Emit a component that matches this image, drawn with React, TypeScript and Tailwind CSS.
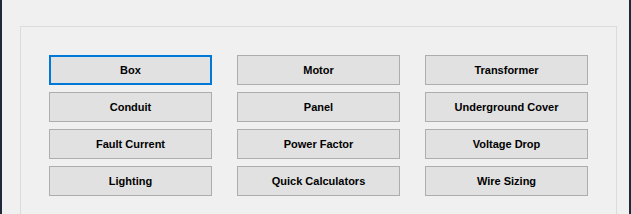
const buttons = [
  "Box",
  "Motor",
  "Transformer",
  "Conduit",
  "Panel",
  "Underground Cover",
  "Fault Current",
  "Power Factor",
  "Voltage Drop",
  "Lighting",
  "Quick Calculators",
  "Wire Sizing",
];

export default function App() {
  return (
    <div className="flex h-[214px] w-[631px] overflow-hidden bg-[#1e2a38]">
      {/* Window body */}
      <div className="mx-[2px] flex-1 bg-[#f0f0f0] pl-[18px] pr-[12px] pt-[26px]">
        {/* Group box */}
        <div className="h-[200px] border-l border-r border-t border-[#dcdcdc] pl-[28px] pt-[28px]">
          <div className="grid grid-cols-[163px_163px_163px] gap-x-[25px] gap-y-[7px]">
            {buttons.map((label, i) => (
              <button
                key={label}
                className={`h-[30px] border bg-[#e1e1e1] text-[11px] font-bold text-black ${
                  i === 0 ? "border-[#0078d7] outline outline-1 outline-[#0078d7] outline-offset-[-2px]" : "border-[#adadad]"
                }`}
                style={{ fontFamily: '"Liberation Sans", Arial, sans-serif' }}
              >
                {label}
              </button>
            ))}
          </div>
        </div>
      </div>
    </div>
  );
}
